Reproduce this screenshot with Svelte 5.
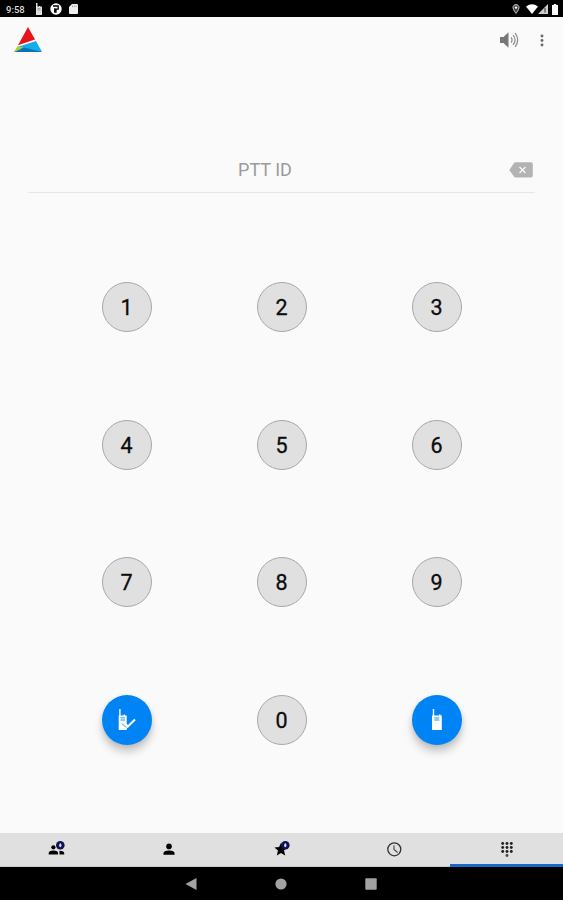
<script>
  let pttId = $state('');
  let activeTab = $state('dialpad');

  const keys = ['1', '2', '3', '4', '5', '6', '7', '8', '9', 'check', '0', 'call'];
  const tabs = ['groups', 'contacts', 'favorites', 'recents', 'dialpad'];

  const press = (key) => (pttId += key);
  const erase = () => (pttId = pttId.slice(0, -1));
</script>

{#snippet count()}
  <circle cx="13.3" cy="5.2" r="4.3" fill="#10105c" />
  <ellipse cx="13.3" cy="5.2" rx="1.1" ry="2" fill="#e0e0e0" />
{/snippet}

<div class="screen">
  <header class="status">
    <span class="time">9:58</span>
    <svg class="radio" viewBox="0 0 8 12" width="8" height="12"><path d="M1 0h1.5v3.6H4V3h1v.6h2V12H1z" fill="#ddd" /><path d="M2.5 5.5h3M2.5 7h3" stroke="#888" stroke-width=".7" /></svg>
    <svg class="ptt" viewBox="0 0 12 12" width="12" height="12">
      <circle cx="6" cy="6" r="5.7" fill="#fff" />
      <path d="M3 3h5.2v3.2H6V9H4.7V5.3" fill="none" stroke="#000" stroke-width="1.3" />
    </svg>
    <svg class="sd" viewBox="0 0 9 10" width="9" height="10"><path d="M3 0h5q1 0 1 1v8q0 1-1 1H1q-1 0-1-1V3z" fill="#eee" /><path d="M3.5 1.5v1.6M5.3 1.5v1.6M7 1.5v1.6" stroke="#888" stroke-width=".7" /></svg>
    <span class="grow"></span>
    <svg class="pin" viewBox="0 0 8 10" width="8" height="10"><path d="M4 .6C2.2.6 1 1.9 1 3.6 1 5.7 4 9.4 4 9.4s3-3.7 3-5.8C7 1.9 5.8.6 4 .6z" fill="#444" stroke="#ccc" /><circle cx="4" cy="3.6" r="1.2" fill="#fff" /></svg>
    <svg class="wifi" viewBox="0 0 12 10" width="12" height="10"><path d="M0 2.6Q6-2 12 2.6L6 10z" fill="#fff" /></svg>
    <svg class="signal" viewBox="0 0 10 10" width="10" height="10"><path d="M10 0v10H0z" fill="#ccc" /><path d="M7 4v4.5" stroke="#333" /></svg>
    <svg class="battery" viewBox="0 0 6 11" width="6" height="11"><path d="M1.8 0h2.4v1H6v10H0V1h1.8z" fill="#fff" /></svg>
  </header>

  <div class="appbar">
    <svg class="logo" viewBox="0 0 28 26" width="28" height="26">
      <path d="M14 0l7 12.5L4 18.2z" fill="#e8141a" />
      <path d="M22 14l6 11H9L3.5 20z" fill="#16acec" />
      <path d="M3.2 19.5l6.6 1L0 25z" fill="#b4ce20" />
      <path d="M0 25l10-4.4L28 25z" fill="#0874b8" />
    </svg>
    <span class="grow"></span>
    <button class="plain volume" aria-label="Speaker">
      <svg viewBox="0 0 20 16" width="20" height="16">
        <path d="M1 5h3.5L9.5.3v15.4L4.500 11H1z" fill="#777" />
        <path d="M12 5.500q2.200 2.500 0 5M14 3.200q4.200 4.800 0 9.600M16.200 1.200q5 6.800 0 13.600" fill="none" stroke="#8a8a8a" stroke-width="1.200" />
      </svg>
    </button>
    <button class="plain more" aria-label="More">
      <svg viewBox="0 0 4 13" width="4" height="13" fill="#6a6a6a"><circle cx="2" cy="2" r="1.450" /><circle cx="2" cy="6.500" r="1.450" /><circle cx="2" cy="11" r="1.450" /></svg>
    </button>
  </div>

  <div class="field">
    <span class="value" class:filled={pttId}>{pttId || 'PTT ID'}</span>
    <button class="plain" aria-label="Erase" onclick={erase}>
      <svg viewBox="0 0 24 16" width="24" height="16">
        <path d="M6.5.3H22q1.8 0 1.800 1.800v11.600q0 1.800-1.800 1.800H6.500q-1 0-1.600-.9L.3 8l4.600-6.800Q5.500.3 6.500.3z" fill="#b3b3b3" />
        <path d="M10.500 5l6 6M16.500 5l-6 6" stroke="#fafafa" stroke-width="1.300" />
      </svg>
    </button>
  </div>

  <div class="keypad">
    {#each keys as key}
      {#if key === 'check'}
        <button class="key action" aria-label="Call alert">
          <svg viewBox="0 0 20 22" width="20" height="22">
            <path d="M2.200 0h1.400v6.500h3v-1H8v1h1.700v8L8.500 16l2 2-1 3H1.700V6.500h.5z" fill="#fff" />
            <path d="M8.800 15.200l2 2.300 7.200-7" fill="none" stroke="#fff" stroke-width="2" />
            <path d="M3.500 8.900h4.500M3.500 11h4.500M5 14.500l4 4" stroke="#0083f5" stroke-width=".9" />
          </svg>
        </button>
      {:else if key === 'call'}
        <button class="key action" aria-label="Call">
          <svg viewBox="0 0 20 22" width="20" height="22">
            <path d="M5.800 0h1.400v6.500h4.800v-1h1.500v1h1.300V21H5V6.500h.8z" fill="#fff" />
            <path d="M7.300 9h5M7.300 11h5" stroke="#0083f5" stroke-width=".9" />
          </svg>
        </button>
      {:else}
        <button class="key" onclick={() => press(key)}>{key}</button>
      {/if}
    {/each}
  </div>

  <nav class="tabs">
    {#each tabs as tab}
      <button class="plain tab" class:active={tab === activeTab} aria-label={tab} onclick={() => (activeTab = tab)}>
        <svg viewBox="0 0 18 18" width="18" height="18">
          {#if tab === 'groups'}
            <circle cx="6.400" cy="7.300" r="2.100" />
            <path d="M1.700 14.500v-1.400q0-2.500 4.700-2.500t4.700 2.500v1.400zM12.500 14.500v-3.700q4.700.3 4.700 2.300v1.400z" />
            {@render count()}
          {:else if tab === 'contacts'}
            <circle cx="9" cy="6.400" r="2.800" />
            <path d="M3.500 14.700v-1.400q0-2.800 5.500-2.800t5.500 2.800v1.400z" />
          {:else if tab === 'favorites'}
            <path d="M9 2.700l1.900 4.400 4.700.4-3.600 3.100 1.200 4.900L9 12.900l-4.200 2.600L6 10.600 2.400 7.500l4.700-.4z" />
            {@render count()}
          {:else if tab === 'recents'}
            <circle cx="9.300" cy="9.300" r="6.500" fill="none" stroke="#333" stroke-width="1.300" />
            <path d="M9 5.200v4.300l3.600 3" fill="none" stroke="#444" stroke-width="1.100" />
          {:else}
            {#each [3.5, 7.5, 11.5] as y}
              {#each [4.7, 9, 13.3] as x}
                <circle cx={x} cy={y} r="1.450" fill="#222" />
              {/each}
            {/each}
            <circle cx="9" cy="15.500" r="1.400" fill="#444" />
          {/if}
        </svg>
      </button>
    {/each}
  </nav>

  <footer class="system">
    <svg viewBox="0 0 12 12" width="12" height="12"><path d="M11.500 0v12L.5 6z" /></svg>
    <svg viewBox="0 0 12 12" width="12" height="12"><circle cx="6" cy="6" r="5.600" /></svg>
    <svg viewBox="0 0 12 12" width="12" height="12"><rect x=".3" y=".3" width="11.400" height="11.400" rx="1" /></svg>
  </footer>
</div>

<style>
  :global(body) { margin: 0; }
  .screen {
    display: flex;
    flex-direction: column;
    height: 900px;
    background: #fafafa;
    font-family: Roboto, sans-serif;
    overflow: hidden;
  }
  svg { display: block; flex-shrink: 0; }
  .grow { flex: 1; }
  .plain { padding: 0; border: none; background: none; cursor: pointer; }

  .status {
    display: flex;
    align-items: center;
    box-sizing: border-box;
    height: 17px;
    padding: 1px 5px 0 6px;
    background: #000;
    color: #ddd;
  }
  .time { width: 29px; padding-top: 1px; font-size: 9.5px; font-weight: 500; line-height: 12px; }
  .ptt { margin-left: 7px; }
  .sd { margin-left: 7px; }
  .pin { margin-right: 6px; }
  .signal { margin-right: 4px; }

  .appbar {
    display: flex;
    align-items: center;
    height: 46px;
    padding: 0 19px 0 14px;
  }
  .more { margin-left: 21px; }

  .field {
    display: flex;
    align-items: center;
    box-sizing: border-box;
    height: 46px;
    margin: 84px 28px 0;
    padding-right: 2px;
    border-bottom: 1px solid #e6e6e6;
  }
  .value {
    flex: 1;
    padding: 0 7px 1px 0;
    font-size: 18px;
    text-align: center;
    color: #9b9b9b;
  }
  .value.filled { color: #222; }

  .keypad {
    display: grid;
    grid-template-columns: repeat(3, 155px);
    grid-template-rows: repeat(4, 137.7px);
    place-items: center;
    align-self: center;
    flex: 1;
    padding-top: 45px;
  }
  .key {
    display: grid;
    place-items: center;
    box-sizing: border-box;
    width: 50px;
    height: 50px;
    padding: 1px 0 0;
    border: 1px solid #a8a8a8;
    border-radius: 50%;
    background: #e0e0e0;
    color: #0c0c0c;
    font: 400 21.5px Roboto, sans-serif;
    -webkit-text-stroke: 0.3px #0c0c0c;
    cursor: pointer;
  }
  .action {
    padding: 0;
    border: none;
    background: #0083f5;
    box-shadow: 0 7px 9px rgba(0, 0, 0, 0.2), 0 1px 5px rgba(0, 0, 0, 0.1);
  }

  .tabs {
    display: grid;
    grid-template-columns: repeat(5, 1fr);
    height: 34px;
    background: #e0e0e0;
  }
  .tab {
    display: flex;
    align-items: center;
    justify-content: center;
    box-sizing: border-box;
    padding-bottom: 1px;
    border-bottom: 1px solid #c8c8c8;
  }
  .tab.active { padding-bottom: 0; border-bottom: 3px solid #1769c5; }
  .tab.active svg { margin-top: 1px; }

  .system {
    display: flex;
    align-items: center;
    justify-content: center;
    gap: 78px;
    height: 33px;
    padding-right: 1px;
    background: #000;
    fill: #a2a2a2;
  }
</style>
